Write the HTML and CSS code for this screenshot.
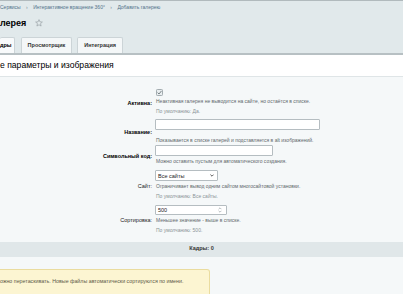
FILE: index.html
```html
<!DOCTYPE html>
<html lang="ru">
<head>
    <meta charset="UTF-8">
    <meta name="viewport" content="width=device-width, initial-scale=1.0">
    <title>Добавить галерею</title>
    <link rel="stylesheet" href="styles.css">
</head>
<body>
    <!-- Header: breadcrumbs, title, tabs -->
    <div class="top">
        <div class="crumbs">
            <span>Сервисы</span>
            <span class="sep">›</span>
            <span>Интерактивное вращение 360°</span>
            <span class="sep">›</span>
            <span>Добавить галерею</span>
        </div>
        <div class="title">
            <span>лерея</span>
            <svg class="star" width="8" height="8" viewBox="0 0 10 10">
                <path d="M5 0.8 L6.2 3.6 L9.2 3.8 L6.9 5.8 L7.6 8.8 L5 7.2 L2.4 8.8 L3.1 5.8 L0.8 3.8 L3.8 3.6 Z" fill="none" stroke="#9aa3a7" stroke-width="0.9" stroke-linejoin="round"/>
            </svg>
        </div>
        <div class="tabs">
            <div class="tab tab-active">дры</div>
            <div class="tab">Просмотрщик</div>
            <div class="tab">Интеграция</div>
        </div>
    </div>

    <!-- Section -->
    <div class="section-head">е параметры и изображения</div>

    <div class="form">
        <div class="row row-active">
            <div class="label req">Активна:</div>
            <div class="cell">
                <svg class="check" width="7" height="7" viewBox="0 0 7 7">
                    <rect x="0.5" y="0.5" width="6" height="6" rx="0.8" fill="#e9eef0" stroke="#a3acb0"/>
                    <path d="M1.6 3.6 L3 5 L5.5 1.9" fill="none" stroke="#6d777b" stroke-width="0.9"/>
                </svg>
                <div class="hint">Неактивная галерея не выводится на сайте, но остаётся в списке.</div>
                <div class="default">По умолчанию: Да.</div>
            </div>
        </div>

        <div class="row row-name">
            <div class="label req">Название:</div>
            <div class="cell">
                <input class="text text-name" type="text">
                <div class="hint hint-gap">Показывается в списке галерей и подставляется в alt изображений.</div>
            </div>
        </div>

        <div class="row row-code">
            <div class="label req">Символьный код:</div>
            <div class="cell">
                <input class="text text-code" type="text">
                <div class="hint">Можно оставить пустым для автоматического создания.</div>
            </div>
        </div>

        <div class="row row-site">
            <div class="label">Сайт:</div>
            <div class="cell">
                <div class="select">
                    <span>Все сайты</span>
                    <svg width="4" height="3" viewBox="0 0 4 3">
                        <path d="M0.4 0.6 L2 2.2 L3.6 0.6" fill="none" stroke="#333" stroke-width="0.8"/>
                    </svg>
                </div>
                <div class="hint">Ограничивает вывод одним сайтом многосайтовой установки.</div>
                <div class="default">По умолчанию: Все сайты.</div>
            </div>
        </div>

        <div class="row row-sort">
            <div class="label">Сортировка:</div>
            <div class="cell">
                <div class="number">
                    <span>500</span>
                    <svg width="4" height="6" viewBox="0 0 4 6">
                        <path d="M0.6 2.2 L2 0.8 L3.4 2.2 M0.6 3.8 L2 5.2 L3.4 3.8" fill="none" stroke="#9aa2a6" stroke-width="0.7"/>
                    </svg>
                </div>
                <div class="hint">Меньшее значение - выше в списке.</div>
                <div class="default">По умолчанию: 500.</div>
            </div>
        </div>
    </div>

    <div class="band">Кадры: 0</div>

    <div class="note">ожно перетаскивать. Новые файлы автоматически сортируются по имени.</div>
</body>
</html>
```

FILE: styles.css
```css
body {
    margin: 0;
    width: 403px;
    height: 294px;
    overflow: hidden;
    background: #f5f8f9;
    font-family: "Liberation Sans", Arial, sans-serif;
    color: #000;
}
.top {
    background: #e1e9eb;
    border-top: 1px solid #b1babd;
    border-bottom: 2px solid #b7c0c3;
}
.crumbs {
    padding-top: 3px;
    height: 7px;
    line-height: 7px;
    font-size: 5px;
    color: #52728a;
    white-space: nowrap;
}
.crumbs .sep {
    margin: 0 4px;
    color: #7c8d99;
}
.title {
    margin-top: 6px;
    height: 12px;
    display: flex;
    align-items: center;
    gap: 9px;
    font-size: 9px;
    font-weight: bold;
}
.star {
    display: block;
}
.tabs {
    margin-top: 8px;
    display: flex;
    gap: 5px;
}
.tab {
    height: 15px;
    line-height: 15px;
    padding: 0 6px;
    background: #f4f7f8;
    border: 1px solid #ccd4d7;
    border-bottom: none;
    border-radius: 2px 2px 0 0;
    font-size: 5.5px;
    font-weight: bold;
    color: #333;
}
.tab-active {
    padding: 0 2px 0 0;
    border-left: none;
    margin-right: 1px;
    background: #f8fafb;
    color: #000;
}
.section-head {
    height: 21px;
    line-height: 21px;
    background: #fff;
    border-bottom: 1px solid #dfe5e7;
    font-size: 8.6px;
    white-space: nowrap;
}
.form {
    padding-bottom: 7px;
}
.row {
    display: flex;
    align-items: center;
}
.row-active { padding-top: 12px; }
.row-name { padding-top: 3px; }
.row-site { padding-top: 4px; }
.row-sort { padding-top: 4px; }
.label {
    width: 152px;
    text-align: right;
    font-size: 5.5px;
    color: #222;
    white-space: nowrap;
}
.label.req {
    font-weight: bold;
    color: #000;
}
.cell {
    margin-left: 3px;
    display: flex;
    flex-direction: column;
    align-items: flex-start;
}
.check {
    display: block;
    margin-left: 1px;
}
.hint, .default {
    padding-left: 1px;
    height: 10px;
    line-height: 10px;
    font-size: 5px;
    color: #5f686c;
    white-space: nowrap;
}
.default {
    color: #8b9498;
}
.hint-gap {
    margin-top: 5px;
}
.text {
    display: block;
    box-sizing: border-box;
    height: 11px;
    margin: 0;
    padding: 0 2px;
    border: 1px solid #b5bdc1;
    border-radius: 1px;
    background: #fff;
}
.text-name { width: 165px; }
.text-code { width: 118px; }
.select, .number {
    box-sizing: border-box;
    display: flex;
    align-items: center;
    justify-content: space-between;
    height: 11px;
    padding: 0 3px 0 2px;
    border: 1px solid #b5bdc1;
    border-radius: 1px;
    background: #fff;
    font-size: 5.5px;
    color: #222;
}
.select {
    width: 63px;
}
.number {
    width: 72px;
    height: 10px;
    padding-right: 4px;
}
.band {
    height: 15px;
    line-height: 13px;
    background: #e0e7e9;
    text-align: center;
    font-size: 5.5px;
    font-weight: bold;
    color: #333;
}
.note {
    margin-top: 12px;
    width: 210px;
    box-sizing: border-box;
    height: 30px;
    padding-top: 6px;
    line-height: 10px;
    background: #fcf5d2;
    border: 1px solid #eadc9f;
    border-left: none;
    border-radius: 0 3px 3px 0;
    font-size: 5.3px;
    color: #5d5a47;
    white-space: nowrap;
}
```
